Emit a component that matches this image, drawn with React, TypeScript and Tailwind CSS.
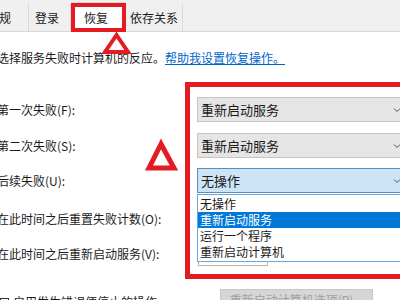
import React from 'react'

const font = { fontFamily: '"Noto Sans CJK SC", "Noto Sans", sans-serif' }

const Chevron: React.FC = () => (
  <svg width="8" height="6" viewBox="0 0 8 6" className="shrink-0">
    <path d="M1 1.5 L4 4.5 L7 1.5" fill="none" stroke="#555" strokeWidth="1" />
  </svg>
)

const Combo: React.FC<{ value: string; active?: boolean }> = ({ value, active }) => (
  <div
    className={
      'ml-[197px] w-[213px] shrink-0 h-[25px] flex items-center justify-between pl-[3px] pr-[8px] border text-[13px] ' +
      (active ? 'bg-[#cde4f7] border-[#5a8dc0]' : 'bg-[#e5e5e5] border-[#c4c4c4]')
    }
  >
    <span>{value}</span>
    <Chevron />
  </div>
)

const Row: React.FC<{ label: string; className?: string; children?: React.ReactNode }> = ({ label, className, children }) => (
  <div className={'relative flex items-center h-[25px] ' + (className ?? '')}>
    <span className="absolute left-[-3px] text-[12px] whitespace-nowrap">{label}</span>
    {children}
  </div>
)

export default function App() {
  return (
    <div className="relative w-[400px] h-[300px] overflow-hidden bg-white text-[#1a1a1a]" style={font}>
      {/* tab strip */}
      <div className="h-[32px] bg-[#f0f0f0] border-b border-[#d9d9d9] flex items-end text-[12px]">
        <div className="ml-[-16px] w-[45px] h-[27px] pl-[3px] flex items-center border-r border-[#d9d9d9]">常规</div>
        <div className="w-[42px] h-[27px] pl-[6px] flex items-center border-r border-[#d9d9d9]">登录</div>
        <div className="w-[54px] h-[30px] pl-[12px] flex items-center bg-white border-x border-t border-[#d9d9d9] mb-[-1px]">恢复</div>
        <div className="w-[58px] h-[27px] pl-[5px] flex items-center border-r border-[#d9d9d9]">依存关系</div>
      </div>

      {/* description */}
      <div className="mt-[18px] h-[16px] leading-[16px] ml-[-3px] text-[12px] whitespace-nowrap">
        选择服务失败时计算机的反应。
        <span className="text-[#0066cc] underline">帮助我设置恢复操作。</span>
      </div>

      {/* rows */}
      <Row label="第一次失败(F):" className="mt-[31px]">
        <Combo value="重新启动服务" />
      </Row>
      <Row label="第二次失败(S):" className="mt-[11px]">
        <Combo value="重新启动服务" />
      </Row>
      <Row label="后续失败(U):" className="mt-[10px]">
        <Combo value="无操作" active />
      </Row>
      <Row label="在此时间之后重置失败计数(O):" className="mt-[13px]">
        <div className="ml-[198px] w-[70px] shrink-0 h-[24px] border border-[#b5b5b5]" />
      </Row>
      <Row label="在此时间之后重新启动服务(V):" className="mt-[10px]">
        <div className="ml-[198px] w-[70px] shrink-0 h-[24px] border border-[#b5b5b5]" />
      </Row>

      {/* bottom */}
      <div className="relative mt-[23px] flex items-start text-[12px]">
        <div className="flex items-center gap-[4px] mt-[4px]">
          <div className="w-[9px] h-[9px] border border-[#333] bg-white" />
          <span className="whitespace-nowrap">启用发生错误便停止的操作。</span>
        </div>
        <div className="absolute left-[220px] top-0 w-[153px] h-[22px] bg-[#d6d6d6] border border-[#c8c8c8] flex items-center justify-center text-[#a0a0a0]">
          重新启动计算机选项(R)...
        </div>
      </div>

      {/* open dropdown list */}
      <div className="absolute left-[197px] top-[194px] w-[215px] h-[68px] bg-white border border-[#6aa6e0] py-[1px] text-[12px]">
        <div className="h-[16px] leading-[16px] pl-[2px]">无操作</div>
        <div className="h-[16px] leading-[16px] pl-[2px] bg-[#0078d7] text-white">重新启动服务</div>
        <div className="h-[16px] leading-[16px] pl-[2px]">运行一个程序</div>
        <div className="h-[16px] leading-[16px] pl-[2px]">重新启动计算机</div>
      </div>

      {/* red annotations */}
      <div className="absolute left-[71px] top-[3px] w-[55px] h-[29px] border-[4px] border-[#e41b23]" />
      <div className="absolute left-[185px] top-[82px] w-[240px] h-[197px] border-[5px] border-[#e41b23]" />
      <svg className="absolute left-0 top-0" width="400" height="300" viewBox="0 0 400 300">
        <polygon points="116.5,35 105,52 128,52" fill="none" stroke="#e41b23" strokeWidth="4" strokeLinejoin="miter" />
        <polygon points="161,144 149,168 174,168" fill="none" stroke="#e41b23" strokeWidth="5" strokeLinejoin="miter" />
      </svg>
    </div>
  )
}
